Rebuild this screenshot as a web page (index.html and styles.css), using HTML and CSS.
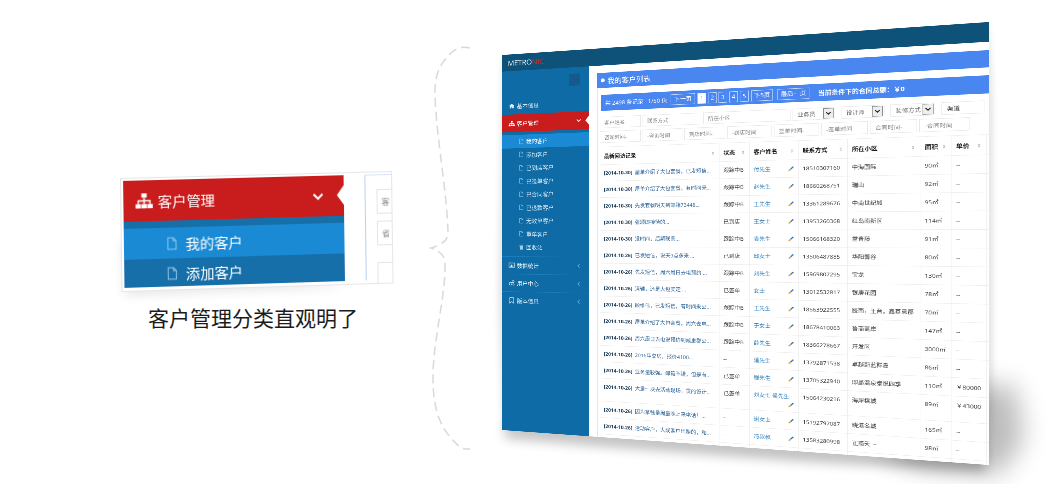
FILE: index.html
```html
<!DOCTYPE html>
<html lang="zh-CN">
<head>
<meta charset="utf-8">
<title>客户管理</title>
<link rel="stylesheet" href="styles.css">
</head>
<body>
<svg class="defs" aria-hidden="true">
  <symbol id="i-sitemap" viewBox="0 0 16 16"><path fill="currentColor" d="M5.5 1h5v4h-5zM0 11h5v4H0zM5.5 11h5v4h-5zM11 11h5v4h-5z"/><path fill="none" stroke="currentColor" stroke-width="1.3" d="M8 5v6M2.5 11V8h11v3"/></symbol>
  <symbol id="i-file" viewBox="0 0 16 16"><path fill="none" stroke="currentColor" stroke-width="1.2" d="M3 1h6.5L13 4.500V15H3zM9.500 1v3.500H13"/></symbol>
  <symbol id="i-chev" viewBox="0 0 12 12"><path fill="none" stroke="currentColor" stroke-width="2" d="M1.500 3.500 6 8l4.500-4.500"/></symbol>
  <symbol id="i-left" viewBox="0 0 12 12"><path fill="none" stroke="currentColor" stroke-width="1.500" d="M8 2 4 6l4 4"/></symbol>
  <symbol id="i-home" viewBox="0 0 16 16"><path fill="currentColor" d="M8 2 1 8h2v6h4v-4h2v4h4V8h2z"/></symbol>
  <symbol id="i-chart" viewBox="0 0 16 16"><path fill="none" stroke="currentColor" stroke-width="1.300" d="M1 2h14v11H1z"/><path fill="currentColor" d="M3 9h2v3H3zM6.500 6h2v6h-2zM10 8h2v4h-2z"/></symbol>
  <symbol id="i-users" viewBox="0 0 16 16"><circle cx="5" cy="10" r="3.500" fill="none" stroke="currentColor" stroke-width="1.500"/><circle cx="11.500" cy="4.500" r="2.500" fill="none" stroke="currentColor" stroke-width="1.300"/><circle cx="12.500" cy="12" r="1.800" fill="none" stroke="currentColor" stroke-width="1.200"/></symbol>
  <symbol id="i-mark" viewBox="0 0 16 16"><path fill="none" stroke="currentColor" stroke-width="1.300" d="M3 1h10v14l-5-4-5 4z"/></symbol>
  <symbol id="i-bin" viewBox="0 0 16 16"><path fill="currentColor" d="M3 4h10l-1 11H4zM2 2h4l1-1h2l1 1h4v1H2z"/></symbol>
  <symbol id="i-pen" viewBox="0 0 12 12"><path fill="none" stroke="#ef9a2d" stroke-width="2.600" d="M1.500 10.500 5.500 6.500"/><path fill="none" stroke="#1f7fc8" stroke-width="2.600" d="M5.500 6.500 10.500 1.500"/></symbol>
</svg>

<div class="stage">
  <svg class="backdrop" viewBox="0 0 1049 484" aria-hidden="true">
    <defs>
      <filter id="soft" x="-20%" y="-100%" width="140%" height="300%"><feGaussianBlur stdDeviation="6"/></filter>
      <filter id="softer" x="-20%" y="-50%" width="140%" height="200%"><feGaussianBlur stdDeviation="3"/></filter>
      <filter id="wide" x="-60%" y="-60%" width="220%" height="220%"><feGaussianBlur stdDeviation="13"/></filter>
    </defs>
    <polygon class="shade-bottom" filter="url(#soft)" points="505,425 985,455 985,472 800,461 600,446 505,438"/>
    <polygon class="shade-corner" filter="url(#wide)" points="880,450 985,385 1015,385 1024,440 1000,474 920,468"/>
    <polygon class="shade-edge" filter="url(#softer)" points="502,60 989,26 993,100 993,400 989,460 502,428 498,300"/>
    <polygon class="shade-card" filter="url(#soft)" points="122,240 240,270 350,286 125,295"/>
    <path class="brace" d="M470 48C462 46 456 48 450 54C440 64 435 75 435 90C435 130 447 190 448 232C448 240 444 244 431 248C442 252 445 256 445 266C445 300 433 340 433 378C433 410 440 430 460 447C463 449 466 449 470 449"/>
  </svg>

  <!-- zoomed part of the side menu -->
  <div class="card">
    <div class="card-menu">
      <div class="card-head">
        <svg class="card-ico"><use href="#i-sitemap"/></svg>
        <span class="card-title">客户管理</span>
        <svg class="card-chev"><use href="#i-chev"/></svg>
        <span class="card-notch"></span>
      </div>
      <div class="card-sub card-sub-on"><svg class="card-file"><use href="#i-file"/></svg>我的客户</div>
      <div class="card-sub"><svg class="card-file"><use href="#i-file"/></svg>添加客户</div>
    </div>
    <div class="card-thumb">
      <div class="thumb-box thumb-a">客</div>
      <div class="thumb-box thumb-b">省</div>
      <div class="thumb-box thumb-c"></div>
    </div>
  </div>
  <div class="caption">客户管理分类直观明了</div>

  <!-- the tilted screenshot, 1000x900 flat -->
  <div class="screen">
    <div class="topbar"><span class="logo">METRO<em>NIC</em></span></div>
    <div class="body">
      <div class="side">
        <div class="toggle"></div>
        <div class="nav"><svg class="nav-ico"><use href="#i-home"/></svg>基本信息</div>
        <div class="nav nav-on"><svg class="nav-ico"><use href="#i-sitemap"/></svg>客户管理<svg class="nav-arrow"><use href="#i-chev"/></svg><span class="nav-notch"></span></div>
        <div class="subs">
          <div class="sub sub-on"><svg class="sub-ico"><use href="#i-file"/></svg>我的客户</div>
          <div class="sub"><svg class="sub-ico"><use href="#i-file"/></svg>添加客户</div>
          <div class="sub"><svg class="sub-ico"><use href="#i-file"/></svg>已到店客户</div>
          <div class="sub"><svg class="sub-ico"><use href="#i-file"/></svg>已签单客户</div>
          <div class="sub"><svg class="sub-ico"><use href="#i-file"/></svg>已合同客户</div>
          <div class="sub"><svg class="sub-ico"><use href="#i-file"/></svg>已退款客户</div>
          <div class="sub"><svg class="sub-ico"><use href="#i-file"/></svg>无效单客户</div>
          <div class="sub"><svg class="sub-ico"><use href="#i-file"/></svg>重单客户</div>
          <div class="sub"><svg class="sub-ico"><use href="#i-bin"/></svg>回收站</div>
        </div>
        <div class="nav nav-line"><svg class="nav-ico"><use href="#i-chart"/></svg>数据统计<svg class="nav-arrow"><use href="#i-left"/></svg></div>
        <div class="nav nav-line"><svg class="nav-ico"><use href="#i-users"/></svg>用户中心<svg class="nav-arrow"><use href="#i-left"/></svg></div>
        <div class="nav nav-line"><svg class="nav-ico"><use href="#i-mark"/></svg>版本信息<svg class="nav-arrow"><use href="#i-left"/></svg></div>
      </div>

      <div class="main">
        <div class="panel-title"><span class="dot"></span>我的客户列表</div>
        <div class="panel">
          <div class="pager">
            <span class="pg-info">共 2498 条记录&nbsp;&nbsp;&nbsp;1/50 页</span>
            <span class="pg pg-next">下一页</span>
            <span class="pg pg-n pg-cur">1</span>
            <span class="pg pg-n">2</span>
            <span class="pg pg-n">3</span>
            <span class="pg pg-n">4</span>
            <span class="pg pg-n">5</span>
            <span class="pg pg-five">下5页</span>
            <span class="pg pg-last">最后一页</span>
            <span class="pg-total">当前条件下的合同总额：￥0</span>
          </div>

          <div class="filters">
            <span class="fld w91">客户姓名</span>
            <span class="fld w126">联系方式</span>
            <span class="fld w178">所在小区</span>
            <span class="fld fld-sel w83">业务员<b class="arrow"><svg><use href="#i-chev"/></svg></b></span>
            <span class="fld fld-sel w82">设计师<b class="arrow"><svg><use href="#i-chev"/></svg></b></span>
            <span class="fld fld-sel w82">装修方式<b class="arrow"><svg><use href="#i-chev"/></svg></b></span>
            <span class="fld fld-dark w76">渠道</span>
          </div>
          <div class="filters filters-2">
            <span class="fld w91">咨询时间-</span>
            <span class="fld w86">-咨询时间</span>
            <span class="fld w86">到店时间-</span>
            <span class="fld w91">-到店时间</span>
            <span class="fld w89">签单时间-</span>
            <span class="fld w89">-签单时间</span>
            <span class="fld w87">合同时间-</span>
            <span class="fld w90">-合同时间</span>
          </div>

          <table class="list">
            <colgroup>
              <col class="c-log"><col class="c-st"><col class="c-name"><col class="c-tel"><col class="c-addr"><col class="c-area"><col class="c-price"><col class="c-end">
            </colgroup>
            <thead>
              <tr>
                <th><div class="th">最新回访记录<i>⇕</i></div></th>
                <th><div class="th">状态<i>⇕</i></div></th>
                <th><div class="th">客户姓名<i>⇕</i></div></th>
                <th><div class="th">联系方式<i>⇕</i></div></th>
                <th><div class="th">所在小区<i>⇕</i></div></th>
                <th><div class="th">面积<i>⇕</i></div></th>
                <th><div class="th">单价<i>⇕</i></div></th>
                <th></th>
              </tr>
            </thead>
            <tbody>
              <tr><td><b>[2014-10-30]</b> 屋单介绍了大包套餐，已发短信...</td><td>跟踪中B</td><td><a>付先生</a><svg class="pen"><use href="#i-pen"/></svg></td><td>18510307160</td><td>中海国际</td><td>90㎡</td><td>--</td><td></td></tr>
              <tr><td><b>[2014-10-30]</b> 屋单介绍了大包套餐，有时间来...</td><td>跟踪中B</td><td><a>赵先生</a><svg class="pen"><use href="#i-pen"/></svg></td><td>18660268751</td><td>瑞山</td><td>92㎡</td><td>--</td><td></td></tr>
              <tr><td><b>[2014-10-30]</b> 先发套餐明天到邮箱73448...</td><td>跟踪中B</td><td><a>王先生</a><svg class="pen"><use href="#i-pen"/></svg></td><td>13361289676</td><td>中南世纪城</td><td>95㎡</td><td>--</td><td></td></tr>
              <tr><td><b>[2014-10-30]</b> 张颂即接待的...</td><td>已到店</td><td><a>王女士</a><svg class="pen"><use href="#i-pen"/></svg></td><td>13953260368</td><td>红岛南新区</td><td>114㎡</td><td>--</td><td></td></tr>
              <tr><td><b>[2014-10-30]</b> 没时间，后期联系...</td><td>跟踪中B</td><td><a>袁先生</a><svg class="pen"><use href="#i-pen"/></svg></td><td>15066168320</td><td>常青藤</td><td>91㎡</td><td>--</td><td></td></tr>
              <tr><td><b>[2014-10-26]</b> 已发短信，说天9点多来 ...</td><td>已到店</td><td><a>邱女士</a><svg class="pen"><use href="#i-pen"/></svg></td><td>13506487885</td><td>华阳馨谷</td><td>80㎡</td><td>--</td><td></td></tr>
              <tr><td><b>[2014-10-26]</b> 先发短信，周六周日去电预约 ...</td><td>跟踪中B</td><td><a>刘先生</a><svg class="pen"><use href="#i-pen"/></svg></td><td>15969807295</td><td>宝龙</td><td>130㎡</td><td>--</td><td></td></tr>
              <tr><td><b>[2014-10-26]</b> 清辅，还是大包实定 ...</td><td>已签单</td><td><a>女士</a><svg class="pen"><use href="#i-pen"/></svg></td><td>13012532817</td><td>银庚花园</td><td>78㎡</td><td>--</td><td></td></tr>
              <tr><td><b>[2014-10-26]</b> 顾维伟，已发短信，有时间来公...</td><td>跟踪中B</td><td><a>王先生</a><svg class="pen"><use href="#i-pen"/></svg></td><td>18563922555</td><td>胶南，王台，鑫基意郡</td><td>70㎡</td><td>--</td><td></td></tr>
              <tr><td><b>[2014-10-26]</b> 屋单介绍了大包套餐，周六去电...</td><td>跟踪中B</td><td><a>于女士</a><svg class="pen"><use href="#i-pen"/></svg></td><td>18678410063</td><td>鲁商蓝岸</td><td>147㎡</td><td>--</td><td></td></tr>
              <tr><td><b>[2014-10-26]</b> 周六周日去电说预约到威重郡公...</td><td>跟踪中B</td><td><a>薛先生</a><svg class="pen"><use href="#i-pen"/></svg></td><td>18366278667</td><td>开发区</td><td>3000㎡</td><td>--</td><td></td></tr>
              <tr><td><b>[2014-10-26]</b> 2016年交房，报价4100...</td><td>--</td><td><a>潘先生</a><svg class="pen"><use href="#i-pen"/></svg></td><td>13792871538</td><td>卓越蔚蓝群岛</td><td>86㎡</td><td>--</td><td></td></tr>
              <tr><td><b>[2014-10-26]</b> 业务量较强。邮箱不错，但是有...</td><td>已签单</td><td><a>程先生</a><svg class="pen"><use href="#i-pen"/></svg></td><td>13705322940</td><td>即墨温泉泰悦四季</td><td>110㎡</td><td>￥80000</td><td></td></tr>
              <tr><td><b>[2014-10-26]</b> 大量一块去活动现场，贯的设计...</td><td>已签单</td><td><a>刘女士 侯先生</a><svg class="pen"><use href="#i-pen"/></svg></td><td>15064230216</td><td>海岸槟城</td><td>89㎡</td><td>￥43000</td><td></td></tr>
              <tr><td><b>[2014-10-26]</b> 因为拿钱量周量晚上来电话！...</td><td>--</td><td><a>谢女士</a><svg class="pen"><use href="#i-pen"/></svg></td><td>15192797087</td><td>晓港名城</td><td>165㎡</td><td>--</td><td></td></tr>
              <tr><td><b>[2014-10-26]</b> 活动客户，大成客户出租的，和...</td><td>--</td><td><a>冯叔叔</a><svg class="pen"><use href="#i-pen"/></svg></td><td>13583280998</td><td>正商天一</td><td>98㎡</td><td>--</td><td></td></tr>
              <tr><td><b>[2014-10-26]</b> 活动客户，已发短信，有时间来...</td><td>--</td><td><a>孙先生</a><svg class="pen"><use href="#i-pen"/></svg></td><td>15166618682</td><td>赞鸟新园</td><td>84㎡</td><td>--</td><td></td></tr>
            </tbody>
          </table>
        </div>
      </div>
    </div>
  </div>
</div>
</body>
</html>
```
FILE: styles.css
```css
/* promo graphic: free canvas with a zoomed menu card and a tilted screenshot */

html, body
{ margin: 0;
background: #fff;
}

.defs
{ display: none;
}

.stage
{ position: relative;
width: 1049px;
height: 484px;
overflow: hidden;
font-family: "Open Sans", "Noto Sans CJK SC", sans-serif;
}

.backdrop
{ position: absolute;
left: 0; top: 0;
width: 1049px;
height: 484px;
}

.shade-bottom { fill: #000; opacity: .25; }
.shade-corner { fill: #000; opacity: .26; }
.shade-edge { fill: #000; opacity: .1; }
.shade-card { fill: #000; opacity: .1; }

.brace
{ fill: none;
stroke: #d9d9d9;
stroke-width: 1.5;
stroke-dasharray: 9 5;
}

/* left card */

.card
{ position: absolute;
left: 0; top: 0;
width: 272px;
height: 114px;
box-sizing: border-box;
display: flex;
padding: 2px 0 0 2px;
background: #fff;
border: 1px solid #e6e6e6;
transform-origin: 0 0;
transform: matrix3d(1.0192,-.01736,0,.000049, .01308,.99982,0,-.00000064, 0,0,1,0, 120,178,0,1);
overflow: hidden;
}

.card-menu
{ width: 220px;
flex: none;
height: 107px;
background: #166fa8;
color: #fff;
}

.card-head
{ position: relative;
height: 41px;
margin-bottom: 7px;
display: flex;
align-items: center;
background: #c91d1d;
}

.card-ico
{ width: 17px;
height: 17px;
margin-left: 12px;
}

.card-title
{ margin-left: 5px;
font-size: 14.200px;
}

.card-chev
{ width: 12px;
height: 12px;
margin-left: 97px;
}

.card-notch
{ position: absolute;
right: 0; top: 10px;
border-style: solid;
border-width: 10px 7px 10px 0;
border-color: transparent #fff;
}

.card-sub
{ height: 30px;
display: flex;
align-items: center;
padding-left: 41px;
font-size: 14.200px;
}

.card-sub-on
{ background: #1a8ad4;
height: 31px;
}

.card-file
{ width: 13px;
height: 14px;
margin-right: 7px;
color: #8fc6ec;
}

.card-thumb
{ margin-left: 21px;
flex: 1;
border-left: 1px solid #b8d0f3;
border-top: 1px solid #d8e4f8;
height: 106px;
padding-left: 11px;
}

.thumb-box
{ border: 1px solid #e4e4e4;
border-right: 0;
height: 25px;
font-size: 8px;
line-height: 23px;
padding-left: 4px;
color: #888;
box-sizing: border-box;
}

.thumb-a { margin-top: 14px; }
.thumb-b { margin-top: 7px; }
.thumb-c { margin-top: 17px; height: 22px; }

.caption
{ position: absolute;
left: 148px; top: 301px;
font-size: 21px;
line-height: 32px;
color: #1c1c1c;
font-family: "Noto Sans CJK SC", sans-serif;
}

/* tilted screenshot */

.screen
{ position: absolute;
left: 0; top: 0;
width: 1000px;
height: 900px;
display: flex;
flex-direction: column;
background: #fff;
overflow: hidden;
transform-origin: 0 0;
transform: matrix3d(.33519,-.036377,0,-.0001535, 0,.41667,0,0, 0,0,1,0, 502,55,0,1);
filter: blur(.45px);
font-size: 11.500px;
color: #333;
}

.topbar
{ height: 40px;
flex: none;
display: flex;
align-items: center;
padding-left: 14px;
background: #0e527a;
}

.logo
{ font-size: 17px;
color: #e6eef4;
}

.logo em
{ font-style: normal;
color: #c8342d;
}

.body
{ flex: 1;
display: flex;
min-height: 0;
}

.side
{ width: 204px;
flex: none;
padding-top: 15px;
background: #0f6ba5;
color: #e2f0f9;
font-size: 13px;
}

.toggle
{ width: 25px;
height: 28px;
margin: 0 0 19px 159px;
background: #155a8c;
}

.nav
{ position: relative;
height: 42px;
display: flex;
align-items: center;
}

.nav-ico
{ width: 15px;
height: 15px;
margin: 0 5px 0 16px;
flex: none;
}

.nav-arrow
{ width: 12px;
height: 12px;
margin-left: auto;
margin-right: 17px;
color: #6fb0da;
}

.nav-on
{ background: #c91d1d;
color: #fff;
}

.nav-on .nav-arrow
{ color: #fff;
}

.nav-notch
{ position: absolute;
right: 0; top: 11px;
border-style: solid;
border-width: 10px 8px 10px 0;
border-color: transparent #fff;
}

.nav-line
{ border-top: 1px solid #1b7fbd;
height: 41px;
}

.subs
{ padding: 7px 0 6px;
}

.sub
{ height: 31.500px;
display: flex;
align-items: center;
padding-left: 40px;
color: #cfe6f5;
}

.sub-on
{ background: #1a8ad4;
color: #fff;
}

.sub-ico
{ width: 13px;
height: 14px;
margin-right: 5px;
flex: none;
color: #9accec;
}

.main
{ flex: 1;
min-width: 0;
padding: 17px 0 0 19px;
}

.panel-title
{ height: 35px;
display: flex;
align-items: center;
padding-left: 8px;
background: #4a86f0;
color: #fff;
font-size: 16px;
}

.dot
{ width: 9px;
height: 9px;
margin-right: 6px;
border-radius: 50%;
background: #fff;
}

.panel
{ padding: 16px 0 0 5px;
border-left: 1px solid #cfe0fa;
height: 800px;
}

.pager
{ height: 37px;
margin-left: 3px;
display: flex;
align-items: center;
padding-left: 9px;
background: #4a86f0;
color: #fff;
font-size: 12.500px;
white-space: nowrap;
}

.pg-info
{ width: 144px;
flex: none;
}

.pg
{ height: 24px;
line-height: 22px;
box-sizing: border-box;
flex: none;
border: 1px solid #cfe0fb;
text-align: center;
}

.pg-next { width: 52px; margin-right: 5px; }
.pg-n { width: 18px; margin-right: 4px; }
.pg-cur { background: #fff; color: #4a86f0; }
.pg-five { width: 44px; margin-left: 1px; }
.pg-last { width: 63px; margin-left: 9px; }

.pg-total
{ margin-left: 17px;
font-size: 13px;
font-weight: 700;
}

.filters
{ display: flex;
gap: 4px;
height: 26px;
margin-top: 14px;
white-space: nowrap;
}

.filters-2
{ height: 27px;
margin-top: 7px;
}

.fld
{ flex: none;
box-sizing: border-box;
display: flex;
align-items: center;
padding-left: 9px;
border: 1px solid #e8e8e8;
color: #888;
font-size: 11.500px;
}

.fld-sel
{ color: #666;
position: relative;
justify-content: space-between;
padding-right: 2px;
margin-right: 7px;
}

.fld-dark
{ color: #444;
}

.arrow
{ width: 20px;
height: 22px;
flex: none;
display: flex;
align-items: center;
justify-content: center;
box-sizing: border-box;
border: 1px solid #888;
background: #eee;
color: #222;
}

.arrow svg
{ width: 12px;
height: 12px;
}

.w76 { width: 76px; }
.w82 { width: 82px; }
.w83 { width: 83px; }
.w86 { width: 86px; }
.w87 { width: 87px; }
.w89 { width: 89px; }
.w90 { width: 90px; }
.w91 { width: 91px; }
.w126 { width: 126px; }
.w178 { width: 178px; }

.list
{ margin-top: 9px;
width: 790px;
table-layout: fixed;
border-collapse: collapse;
font-size: 11.500px;
}

.c-log { width: 258px; }
.c-st { width: 62px; }
.c-name { width: 98px; }
.c-tel { width: 95px; }
.c-addr { width: 135px; }
.c-area { width: 56px; }
.c-price { width: 62px; }
.c-end { width: 24px; }

.list th, .list td
{ border: 1px solid #eee;
padding: 10px 8px 9px;
line-height: 18px;
text-align: left;
vertical-align: top;
}

.list th
{ padding: 13px 8px 9px;
color: #111;
font-size: 12px;
white-space: nowrap;
}

.th
{ display: flex;
justify-content: space-between;
}

.th i
{ font-style: normal;
font-weight: 400;
color: #bbb;
font-family: "DejaVu Sans", sans-serif;
font-size: 10px;
}

.list td:first-child
{ color: #2d6396;
white-space: nowrap;
overflow: hidden;
font-size: 11px;
}

.list td:first-child b
{ color: #24445f;
font-size: 10.800px;
margin-right: 3px;
}

.list a
{ color: #2f80bd;
}

.pen
{ float: right;
width: 12px;
height: 12px;
margin-top: 3px;
}
```
